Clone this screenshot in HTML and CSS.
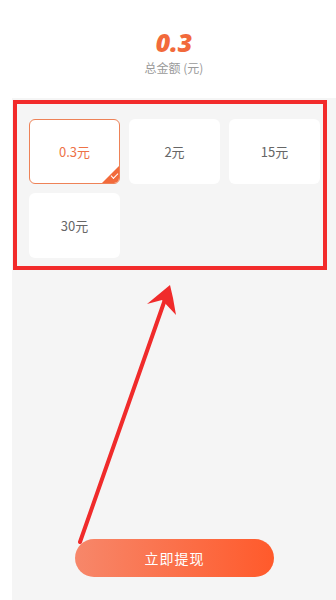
FILE: index.html
```html
<!DOCTYPE html>
<html lang="zh-CN">
<head>
    <meta charset="UTF-8">
    <meta name="viewport" content="width=device-width, initial-scale=1.0">
    <title>提现</title>
    <link rel="stylesheet" href="styles.css">
</head>
<body>
    <div class="summary">
        <p class="total">0.3</p>
        <p class="total-label">总金额 (元)</p>
    </div>

    <div class="panel">
        <div class="amounts">
            <div class="amount selected">0.3元<span class="tick"></span></div>
            <div class="amount">2元</div>
            <div class="amount">15元</div>
            <div class="amount">30元</div>
        </div>
        <button class="withdraw">立即提现</button>
    </div>

    <!-- annotation overlay -->
    <div class="mark-box"></div>
    <svg class="mark-arrow" width="336" height="600" viewBox="0 0 336 600">
        <path d="M80 542 L168 291" stroke="#f02b2b" stroke-width="4" stroke-linecap="round" fill="none"/>
        <path d="M170 285 L147 304 L162 300 L176 315 L173 298 Z" fill="#f02b2b"/>
    </svg>
</body>
</html>
```

FILE: styles.css
```css
body {
    margin: 0;
    background: #fff;
    font-family: "Noto Sans CJK SC", "Noto Sans", sans-serif;
}
.summary {
    height: 98px;
    text-align: center;
    padding: 26px 0 0 12px;
    box-sizing: border-box;
}
.total {
    margin: 0;
    font-size: 25px;
    line-height: 32px;
    font-weight: 800;
    font-style: italic;
    color: #f26a3b;
    font-family: "Open Sans", sans-serif;
}
.total-label {
    margin: 2px 0 0;
    font-size: 12px;
    line-height: 16px;
    color: #9a9a9a;
}
.panel {
    margin-left: 12px;
    background: #f5f5f5;
    height: 502px;
    padding: 21px 16px 0 17px;
    box-sizing: border-box;
}
.amounts {
    display: grid;
    grid-template-columns: repeat(3, 1fr);
    gap: 9px 9px;
}
.amount {
    position: relative;
    height: 65px;
    background: #fff;
    border-radius: 6px;
    display: flex;
    align-items: center;
    justify-content: center;
    font-size: 13px;
    color: #666;
    box-sizing: border-box;
    overflow: hidden;
}
.amount.selected {
    border: 1.5px solid #ee8257;
    color: #ee7246;
}
.tick {
    position: absolute;
    right: 0;
    bottom: 0;
    width: 0;
    height: 0;
    border-left: 17px solid transparent;
    border-bottom: 17px solid #f26a3b;
}
.tick::after {
    content: "";
    position: absolute;
    left: -8px;
    top: 7px;
    width: 6px;
    height: 3px;
    border-left: 1.5px solid #fff;
    border-bottom: 1.5px solid #fff;
    transform: rotate(-45deg);
}
.withdraw {
    display: block;
    margin: 281px auto 0;
    width: 199px;
    height: 38px;
    border: none;
    border-radius: 19px;
    background: linear-gradient(90deg, #f7876a, #ff5a2b);
    color: #fff;
    font-size: 14px;
    font-family: "Noto Sans CJK SC", sans-serif;
    letter-spacing: 1px;
}
.mark-box {
    position: absolute;
    left: 13px;
    top: 100px;
    width: 314px;
    height: 170px;
    border: 4px solid #f22b2b;
    box-sizing: border-box;
}
.mark-arrow {
    position: absolute;
    left: 0;
    top: 0;
}
```
